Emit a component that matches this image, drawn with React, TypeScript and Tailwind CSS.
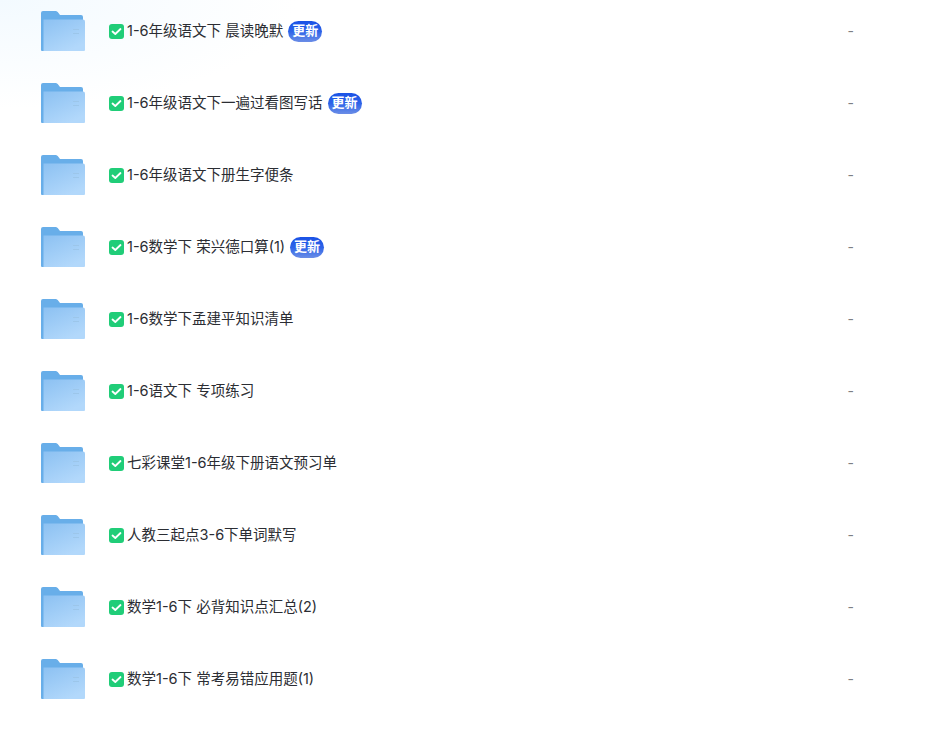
const rows = [
  { name: "1-6年级语文下 晨读晚默", isNew: true },
  { name: "1-6年级语文下一遍过看图写话", isNew: true },
  { name: "1-6年级语文下册生字便条" },
  { name: "1-6数学下 荣兴德口算(1)", isNew: true },
  { name: "1-6数学下孟建平知识清单" },
  { name: "1-6语文下 专项练习" },
  { name: "七彩课堂1-6年级下册语文预习单" },
  { name: "人教三起点3-6下单词默写" },
  { name: "数学1-6下 必背知识点汇总(2)" },
  { name: "数学1-6下 常考易错应用题(1)" },
];

function FolderIcon() {
  return (
    <svg width="44" height="40" viewBox="0 0 44 40" className="shrink-0">
      <defs>
        <linearGradient id="folderFront" x1="0" y1="0" x2="0.6" y2="1">
          <stop offset="0" stopColor="#8cc1f2" />
          <stop offset="1" stopColor="#b2d8fb" />
        </linearGradient>
      </defs>
      <path d="M0 2a2 2 0 0 1 2-2h12c1.500 0 2.500.6 3.500 2l1.500 2h21a2 2 0 0 1 2 2v6H3v28H1a1 1 0 0 1-1-1z" fill="#68aee9" />
      <path d="M2.500 8.500h39.500a2 2 0 0 1 2 2v28.500a1 1 0 0 1-1 1H2.500z" fill="url(#folderFront)" />
      <path d="M32 18h6v1h-6zM32 22h6v1h-6z" fill="#9cc6ea" />
    </svg>
  );
}

function CheckBadge() {
  return (
    <span className="flex h-[15px] w-[15px] shrink-0 items-center justify-center rounded-[3px] bg-[#20cd78]">
      <svg width="11" height="11" viewBox="0 0 11 11" fill="none">
        <path d="M1.500 5.500 4.300 8 9.500 3" stroke="#fff" strokeWidth="1.800" strokeLinecap="round" strokeLinejoin="round" />
      </svg>
    </span>
  );
}

export default function App() {
  return (
    <div className="relative h-[730px] overflow-hidden bg-white font-['Inter','Noto_Sans_CJK_SC',sans-serif]">
      {/* faint blue wash in the corner */}
      <div className="absolute left-0 top-0 h-[110px] w-[300px] bg-[radial-gradient(ellipse_at_top_left,#f3faff,#ffffff_70%)]" />
      <div className="relative -mt-[5px] flex flex-col">
        {rows.map((row) => (
          <div key={row.name} className="flex h-[72px] items-center pl-[41px] pr-[87px]">
            <FolderIcon />
            <div className="ml-6 flex min-w-0 flex-1 items-center">
              <CheckBadge />
              <span className="ml-[3px] whitespace-pre pb-px text-[14.5px] font-normal text-[#2b2d33]">{row.name}</span>
              {row.isNew && (
                <span className="ml-[5px] flex h-[21px] w-[34px] items-center justify-center rounded-full bg-gradient-to-b from-[#1a52e6] via-[#2d63e8] to-[#6b8de6] pb-px text-[13px] font-bold text-white">
                  更新
                </span>
              )}
            </div>
            <span className="pb-[2px] text-[14px] text-[#7d7f85]">-</span>
          </div>
        ))}
      </div>
    </div>
  );
}
